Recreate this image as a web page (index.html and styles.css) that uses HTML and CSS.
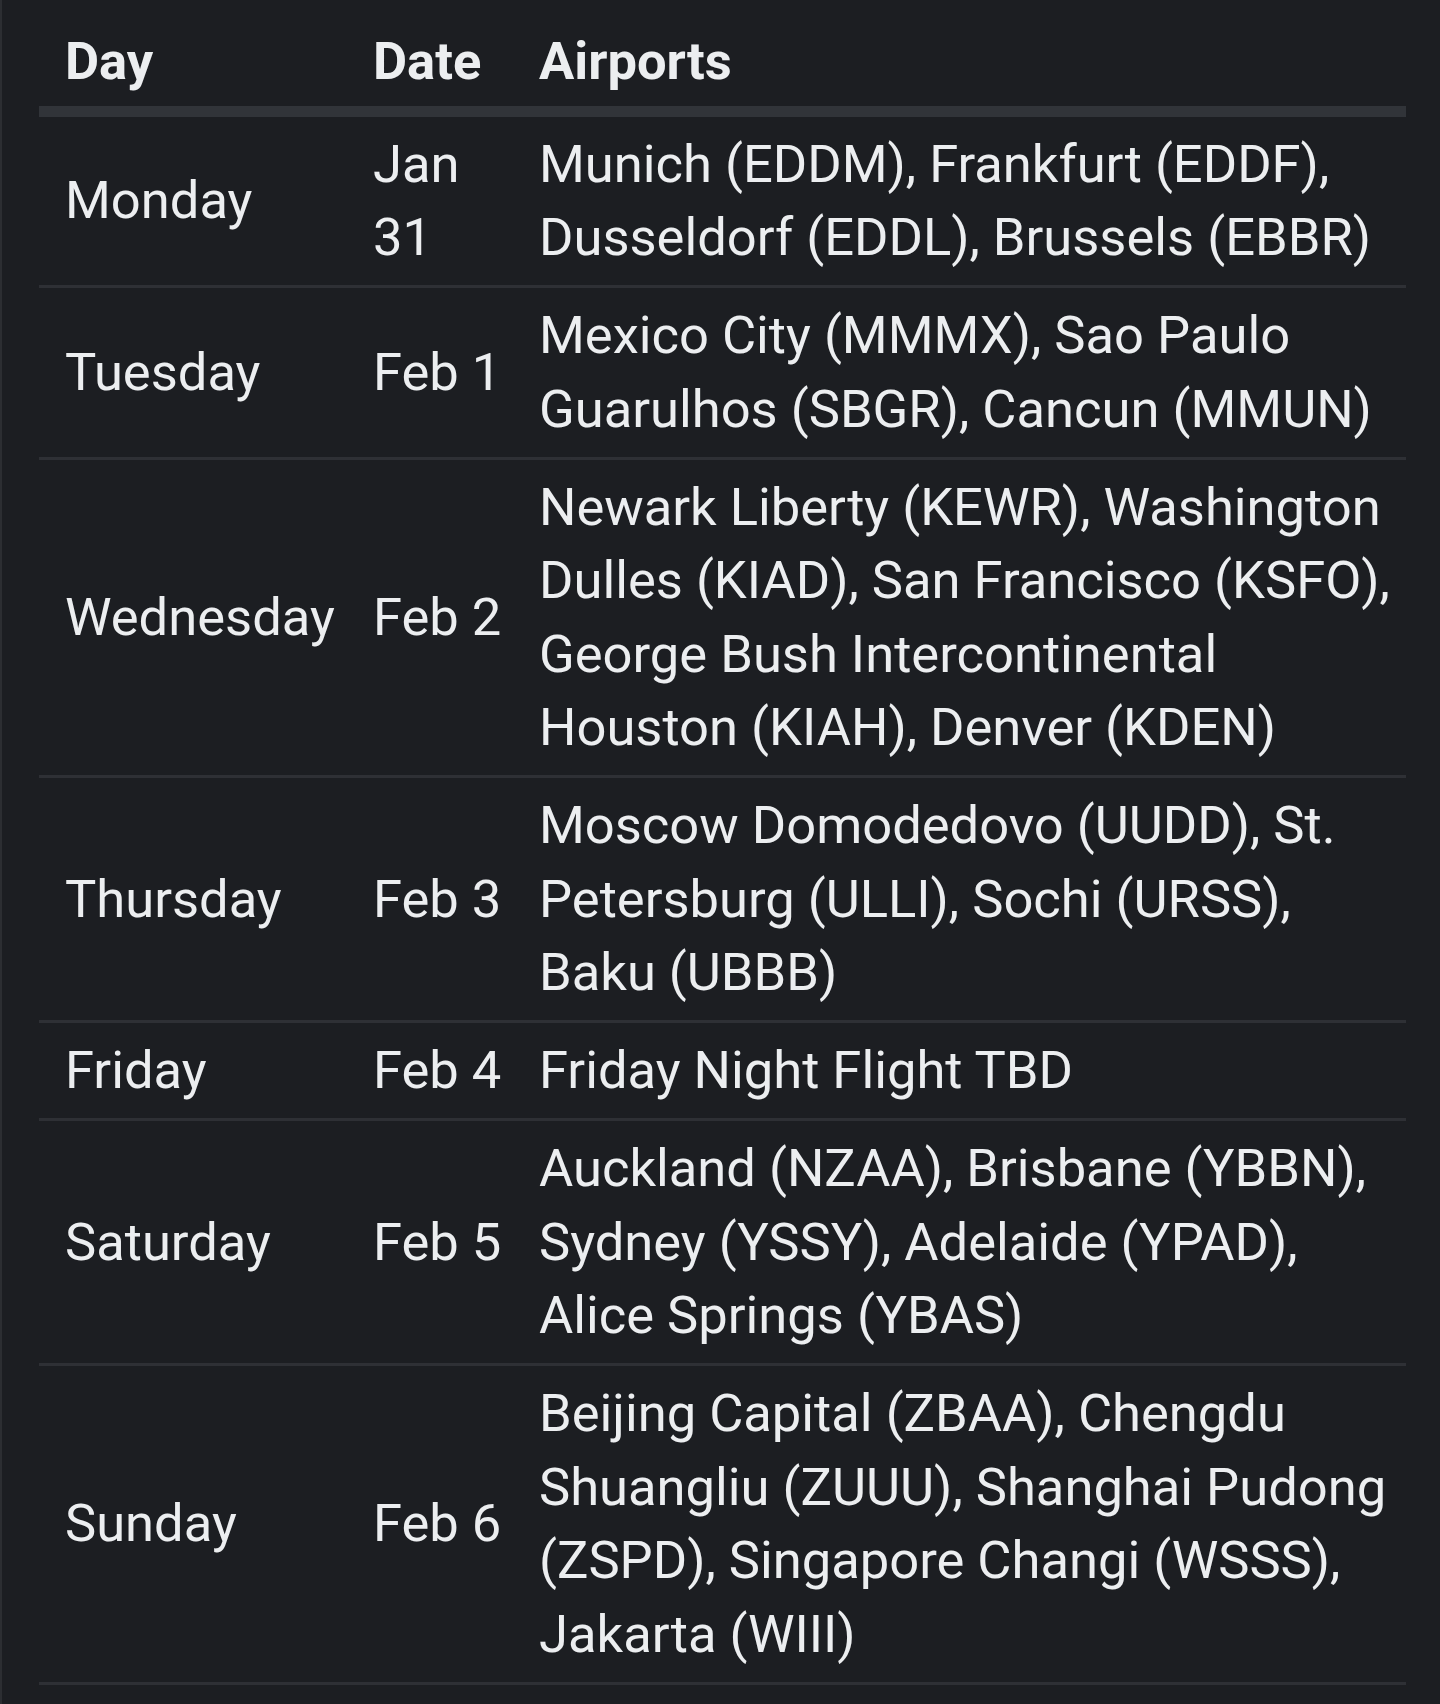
FILE: index.html
```html
<!DOCTYPE html>
<html lang="en">
<head>
<meta charset="utf-8">
<title>Schedule</title>
<link rel="stylesheet" href="styles.css">
</head>
<body>
<div class="page">
  <table class="schedule">
    <colgroup>
      <col class="col-day">
      <col class="col-date">
      <col class="col-airports">
    </colgroup>
    <thead>
      <tr><th>Day</th><th>Date</th><th>Airports</th></tr>
    </thead>
    <tbody>
      <tr><td>Monday</td><td>Jan 31</td><td>Munich (EDDM), Frankfurt (EDDF), Dusseldorf (EDDL), Brussels (EBBR)</td></tr>
      <tr><td>Tuesday</td><td>Feb 1</td><td>Mexico City (MMMX), Sao Paulo Guarulhos (SBGR), Cancun (MMUN)</td></tr>
      <tr><td>Wednesday</td><td>Feb 2</td><td>Newark Liberty (KEWR), Washington Dulles (KIAD), San Francisco (KSFO), George Bush Intercontinental Houston (KIAH), Denver (KDEN)</td></tr>
      <tr><td>Thursday</td><td>Feb 3</td><td>Moscow Domodedovo (UUDD), St. Petersburg (ULLI), Sochi (URSS), Baku (UBBB)</td></tr>
      <tr><td>Friday</td><td>Feb 4</td><td>Friday Night Flight TBD</td></tr>
      <tr><td>Saturday</td><td>Feb 5</td><td>Auckland (NZAA), Brisbane (YBBN), Sydney (YSSY), Adelaide (YPAD), Alice Springs (YBAS)</td></tr>
      <tr><td>Sunday</td><td>Feb 6</td><td>Beijing Capital (ZBAA), Chengdu Shuangliu (ZUUU), Shanghai Pudong (ZSPD), Singapore Changi (WSSS), Jakarta (WIII)</td></tr>
    </tbody>
  </table>
</div>
</body>
</html>
```

FILE: styles.css
```css
html, body {
  margin: 0;
  padding: 0;
  background: #1c1e22;
}

.page {
  min-height: 1704px;
  box-sizing: border-box;
  border-left: 2px solid #2c2e32;
  padding: 14px 0 0 37px;
  font-family: Roboto, "Noto Sans", sans-serif;
  color: #eceef0;
}

.schedule {
  width: 1367px;
  table-layout: fixed;
  border-collapse: separate;
  border-spacing: 0;
  font-size: 52.5px;
  line-height: 73.5px;
}

.col-day { width: 308px; }
.col-date { width: 166px; }
.col-airports { width: 893px; }

.schedule th {
  text-align: left;
  font-weight: 700;
  padding: 10.75px 10px 7.5px 26px;
  border-bottom: 11px solid #313439;
}

.schedule td {
  text-align: left;
  font-weight: 400;
  vertical-align: middle;
  padding: 10.75px 10px 10.75px 26px;
  border-bottom: 3px solid #2e3035;
}
```
